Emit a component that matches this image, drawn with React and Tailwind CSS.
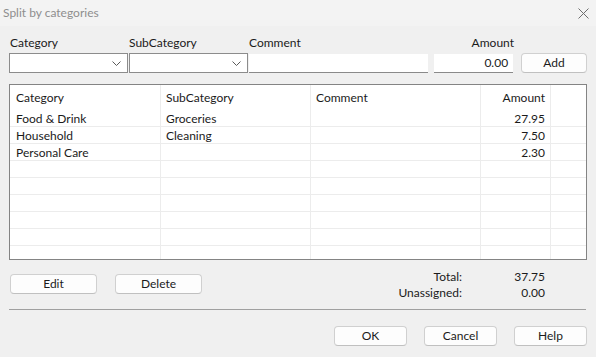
const rows = [
  ['Food & Drink', 'Groceries', '', '27.95'],
  ['Household', 'Cleaning', '', '7.50'],
  ['Personal Care', '', '', '2.30'],
  ['', '', '', ''],
  ['', '', '', ''],
  ['', '', '', ''],
  ['', '', '', ''],
  ['', '', '', ''],
  ['', '', '', ''],
];

function Chevron() {
  return (
    <svg width="9" height="5" viewBox="0 0 9 5" className="text-[#5a5a5a]">
      <path d="M0.5 0.5 L4.5 4.5 L8.5 0.5" fill="none" stroke="currentColor" strokeWidth="1" />
    </svg>
  );
}

function Combo({ className }) {
  return (
    <div className={`h-[20px] bg-white border border-[#8c8c8c] flex items-center justify-end pr-[6px] ${className}`}>
      <Chevron />
    </div>
  );
}

function Btn({ children, className = '' }) {
  return (
    <button className={`h-[20px] bg-[#fdfdfd] border border-[#d0d0d0] border-b-[#c0c0c0] rounded-[4px] text-[12px] leading-none text-[#1b1b1b] ${className}`}>
      {children}
    </button>
  );
}

export default function App() {
  return (
    <div className="w-[596px] h-[357px] bg-[#f0f0f0] font-['Lato',sans-serif] text-[12px] text-[#1b1b1b] overflow-hidden">
      <div className="h-[26px] bg-[#f3f3f3] flex items-center justify-between pl-[3px] pr-[7px]">
        <span className="text-[12px] text-[#8e8e8e]">Split by categories</span>
        <svg width="11" height="11" viewBox="0 0 11 11" className="text-[#6e6e6e]">
          <path d="M0.5 0.5 L10.5 10.5 M10.5 0.5 L0.5 10.5" stroke="currentColor" strokeWidth="1" />
        </svg>
      </div>

      <div className="px-[9px] pt-[10px]">
        <div className="flex h-[14px] leading-[14px]">
          <span className="w-[120px] pl-[1px]">Category</span>
          <span className="w-[120px]">SubCategory</span>
          <span className="w-[185px]">Comment</span>
          <span className="w-[80px] text-right">Amount</span>
        </div>

        <div className="flex items-center mt-[3px] h-[20px]">
          <Combo className="w-[119px]" />
          <Combo className="w-[119px] ml-[1px]" />
          <div className="w-[180px] h-[19px] ml-[1px] bg-white border-b border-[#8a8a8a]" />
          <div className="w-[79px] h-[19px] ml-[6px] bg-white border-b border-[#8a8a8a] flex items-center justify-end pr-[5px]">0.00</div>
          <Btn className="w-[66px] ml-[8px] h-[18px]">Add</Btn>
        </div>

        <div className="mt-[11px] h-[176px] bg-white border border-[#848484] overflow-hidden">
          <div className="grid grid-cols-[151px_150px_170px_70px_1fr] h-[25px] items-center">
            <div className="h-full flex items-center pl-[6px] border-r border-[#ececec]">Category</div>
            <div className="h-full flex items-center pl-[5px] border-r border-[#ececec]">SubCategory</div>
            <div className="h-full flex items-center pl-[5px] border-r border-[#ececec]">Comment</div>
            <div className="h-full flex items-center justify-end pr-[5px] border-r border-[#ececec]">Amount</div>
            <div />
          </div>
          {rows.map((r, i) => (
            <div key={i} className="grid grid-cols-[151px_150px_170px_70px_1fr] h-[17px] border-b border-[#ececec]">
              <div className="flex items-center pl-[6px] border-r border-[#ececec]">{r[0]}</div>
              <div className="flex items-center pl-[5px] border-r border-[#ececec]">{r[1]}</div>
              <div className="flex items-center pl-[5px] border-r border-[#ececec]">{r[2]}</div>
              <div className="flex items-center justify-end pr-[5px] border-r border-[#ececec]">{r[3]}</div>
              <div />
            </div>
          ))}
        </div>

        <div className="flex items-start mt-[9px] h-[32px]">
          <Btn className="w-[87px] ml-[1px] mt-[5px]">Edit</Btn>
          <Btn className="w-[87px] ml-[18px] mt-[5px]">Delete</Btn>
          <div className="ml-auto mr-[42px] grid grid-cols-[auto_83px] grid-rows-[16px_16px] leading-[16px]">
            <span className="text-right">Total:</span>
            <span className="text-right">37.75</span>
            <span className="text-right">Unassigned:</span>
            <span className="text-right">0.00</span>
          </div>
        </div>

        <div className="mt-[8px] h-px bg-[#a0a0a0] mr-[1px]" />

        <div className="flex justify-end gap-[17px] mt-[16px]">
          <Btn className="w-[73px]">OK</Btn>
          <Btn className="w-[73px]">Cancel</Btn>
          <Btn className="w-[73px]">Help</Btn>
        </div>
      </div>
    </div>
  );
}
